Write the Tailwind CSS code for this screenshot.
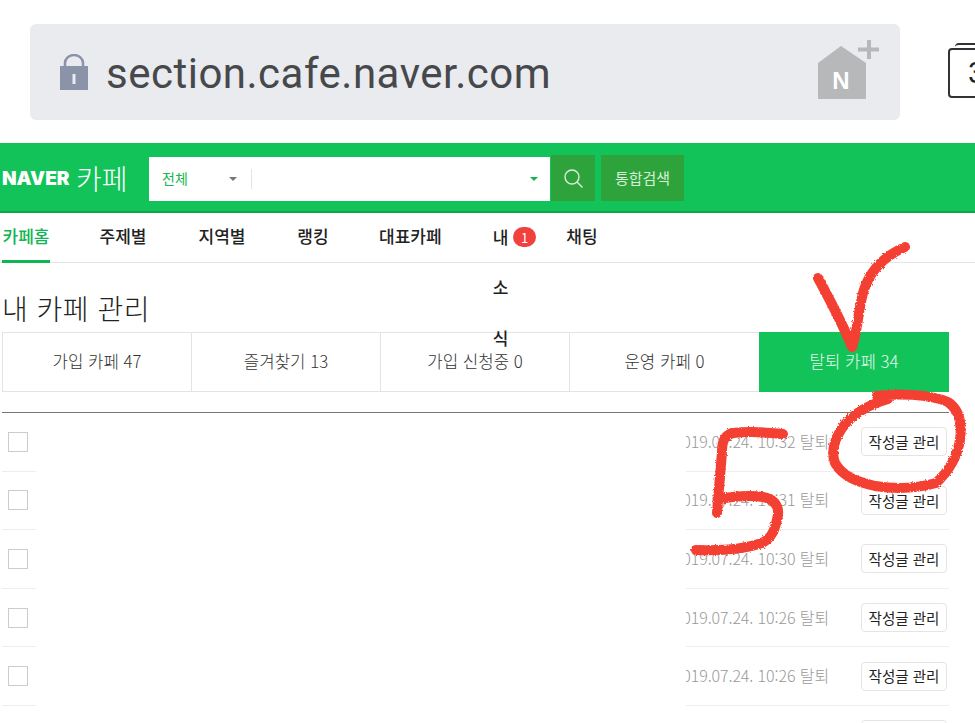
<!DOCTYPE html>
<html lang="ko">

<head>
  <meta charset="UTF-8">
  <script src="https://cdn.jsdelivr.net/npm/@tailwindcss/browser@4"></script>
  <title>내 카페 관리</title>
</head>

<body class="relative h-[723px] w-[975px] overflow-hidden bg-white font-['Noto_Sans_CJK_KR','Noto_Sans',sans-serif] text-[#222]">
  <!-- browser address bar -->
  <div class="flex h-[143px] items-start overflow-hidden pl-[30px] pt-6">
    <div class="flex h-24 w-[870px] shrink-0 items-center rounded-md bg-[#e9ebee] pl-[30px] pr-[21px]">
      <svg class="h-[36px] w-[28px] shrink-0" viewBox="0 0 28 36">
        <path d="M5 14V9a9 8 0 0 1 18 0v5" fill="none" stroke="#8a93a8" stroke-width="2.5" />
        <rect x="0" y="12" width="28" height="24" fill="#8a93a8" />
        <rect x="12.5" y="20" width="3" height="10" fill="#e9ebee" />
      </svg>
      <span class="ml-[18px] mt-[3px] font-['Roboto',sans-serif] text-[42px] leading-none tracking-[0.5px] text-[#47484b]">section.cafe.naver.com</span>
      <svg class="ml-auto mt-[-4px] h-[60px] w-[62px]" viewBox="0 0 62 60">
        <path d="M1 23 24 6 49 23V58a1 1 0 0 1-1 1H2a1 1 0 0 1-1-1Z" fill="#b6b8ba" />
        <path d="M52 0v19M41 9.500h21" stroke="#b6b8ba" stroke-width="4" fill="none" />
        <text x="24" y="49" text-anchor="middle" font-family="Liberation Sans" font-weight="700" font-size="24" fill="#fff">N</text>
      </svg>
    </div>
    <div class="relative ml-[48px] mt-6 h-[50px] w-[60px] shrink-0 rounded-[4px] border-2 border-[#333]">
      <div class="absolute left-[5px] top-[-7px] h-2 w-10 rounded-t-[4px] border-t-2 border-[#333]"></div>
      <span class="absolute left-[18px] top-[8px] font-['Roboto',sans-serif] text-[30px] leading-none text-[#222]">3</span>
    </div>
  </div>

  <!-- green header -->
  <header class="flex h-[70px] items-center border-b-2 border-[#0ea548] bg-[#12c35a] pl-0.5 pt-0.5">
    <span class="w-[70px] font-['Inter',sans-serif] text-[19px] font-black leading-none text-white">NAVER</span>
    <span class="ml-[4px] w-[73px] text-[28px] font-light leading-none text-white">카페</span>
    <div class="mt-px flex h-[44px] w-[401px] items-center bg-white">
      <span class="ml-[13px] w-[67px] text-[14px] text-[#12b553]">전체</span>
      <span class="h-0 w-0 border-x-[4px] border-t-[4px] border-x-transparent border-t-[#777]"></span>
      <span class="ml-[14px] h-5 w-px bg-[#e4e4e4]"></span>
      <span class="ml-auto mr-3 h-0 w-0 border-x-[4px] border-t-[4px] border-x-transparent border-t-[#12b553]"></span>
    </div>
    <div class="ml-px flex h-[46px] w-[44px] items-center justify-center bg-[#2fa33b]">
      <svg class="h-[21px] w-[21px]" viewBox="0 0 21 21" fill="none" stroke="#d8efd9" stroke-width="1.4">
        <circle cx="9" cy="9" r="7" />
        <path d="m14 14 5.500 5.500" />
      </svg>
    </div>
    <div class="ml-[6px] flex h-[46px] w-[83px] items-center justify-center bg-[#2fa33b] text-[15px] text-[#d8efd9]">통합검색</div>
  </header>

  <!-- nav -->
  <nav class="flex h-[50px] border-b border-[#e5e5e5] pl-0.5 text-[17px] font-medium">
    <a class="h-[50px] w-[48px] whitespace-nowrap border-b-[3px] border-[#12b553] text-center leading-[46px] text-[#12b553]">카페홈</a>
    <a class="ml-[49px] w-[48px] whitespace-nowrap text-center leading-[46px]">주제별</a>
    <a class="ml-[51px] w-[48px] whitespace-nowrap text-center leading-[46px]">지역별</a>
    <a class="ml-[51px] w-[32px] whitespace-nowrap text-center leading-[46px]">랭킹</a>
    <a class="ml-[50px] w-[62px] whitespace-nowrap text-center leading-[46px]">대표카페</a>
    <div class="relative z-10 ml-[51px] mt-[-1.500px] h-[50px] w-[17px] break-all text-center leading-[50.500px]">내소식
      <span class="absolute left-[21px] top-[15.500px] flex h-[20px] w-[23px] items-center justify-center rounded-full bg-[#f0413f] text-[13px] font-normal leading-none text-white">1</span>
    </div>
    <a class="ml-[57px] w-[32px] whitespace-nowrap text-center leading-[46px]">채팅</a>
  </nav>

  <main class="pl-0.5">
    <h1 class="mt-[27px] h-[42px] text-[28px] font-light leading-[36px] tracking-[0.5px]">내 카페 관리</h1>

    <!-- tabs -->
    <div class="grid h-[60px] w-[947px] grid-cols-[190px_189px_189px_189px_190px] text-[16.800px] font-light leading-[56px] text-[#333]">
      <a class="border border-[#e3e3e3] text-center">가입 카페 47</a>
      <a class="border-y border-r border-[#e3e3e3] text-center">즐겨찾기 13</a>
      <a class="border-y border-r border-[#e3e3e3] text-center">가입 신청중 0</a>
      <a class="border-y border-[#e3e3e3] text-center">운영 카페 0</a>
      <a class="bg-[#12c35a] text-center leading-[58px] text-[#e6f8ec]">탈퇴 카페 34</a>
    </div>

    <!-- rows -->
    <div class="mt-5 w-[947px] border-t border-[#777]">
      <div class="flex h-[58.600px] items-stretch">
        <div class="flex w-[34px] items-center border-b border-[#eee] pl-1.5"><span class="h-5 w-5 border border-[#ccc]"></span></div>
        <div class="ml-[650px] flex w-[263px] items-center overflow-hidden whitespace-nowrap border-b border-[#eee]"><span class="ml-[-13px] mt-[-2px] w-[156px] shrink-0 text-right text-[16px] font-light tracking-[-0.1px] text-[#999]">2019.07.24. 10:32 탈퇴</span><span class="ml-auto mr-0.5 flex h-[29px] w-[86px] shrink-0 items-center justify-center rounded-[4px] border border-[#e4e4e4] text-[14.500px]">작성글 관리</span></div>
      </div>
      <div class="flex h-[58.600px] items-stretch">
        <div class="flex w-[34px] items-center border-b border-[#eee] pl-1.5"><span class="h-5 w-5 border border-[#ccc]"></span></div>
        <div class="ml-[650px] flex w-[263px] items-center overflow-hidden whitespace-nowrap border-b border-[#eee]"><span class="ml-[-13px] mt-[-2px] w-[156px] shrink-0 text-right text-[16px] font-light tracking-[-0.1px] text-[#999]">2019.07.24. 10:31 탈퇴</span><span class="ml-auto mr-0.5 flex h-[29px] w-[86px] shrink-0 items-center justify-center rounded-[4px] border border-[#e4e4e4] text-[14.500px]">작성글 관리</span></div>
      </div>
      <div class="flex h-[58.600px] items-stretch">
        <div class="flex w-[34px] items-center border-b border-[#eee] pl-1.5"><span class="h-5 w-5 border border-[#ccc]"></span></div>
        <div class="ml-[650px] flex w-[263px] items-center overflow-hidden whitespace-nowrap border-b border-[#eee]"><span class="ml-[-13px] mt-[-2px] w-[156px] shrink-0 text-right text-[16px] font-light tracking-[-0.1px] text-[#999]">2019.07.24. 10:30 탈퇴</span><span class="ml-auto mr-0.5 flex h-[29px] w-[86px] shrink-0 items-center justify-center rounded-[4px] border border-[#e4e4e4] text-[14.500px]">작성글 관리</span></div>
      </div>
      <div class="flex h-[58.600px] items-stretch">
        <div class="flex w-[34px] items-center border-b border-[#eee] pl-1.5"><span class="h-5 w-5 border border-[#ccc]"></span></div>
        <div class="ml-[650px] flex w-[263px] items-center overflow-hidden whitespace-nowrap border-b border-[#eee]"><span class="ml-[-13px] mt-[-2px] w-[156px] shrink-0 text-right text-[16px] font-light tracking-[-0.1px] text-[#999]">2019.07.24. 10:26 탈퇴</span><span class="ml-auto mr-0.5 flex h-[29px] w-[86px] shrink-0 items-center justify-center rounded-[4px] border border-[#e4e4e4] text-[14.500px]">작성글 관리</span></div>
      </div>
      <div class="flex h-[58.600px] items-stretch">
        <div class="flex w-[34px] items-center border-b border-[#eee] pl-1.5"><span class="h-5 w-5 border border-[#ccc]"></span></div>
        <div class="ml-[650px] flex w-[263px] items-center overflow-hidden whitespace-nowrap border-b border-[#eee]"><span class="ml-[-13px] mt-[-2px] w-[156px] shrink-0 text-right text-[16px] font-light tracking-[-0.1px] text-[#999]">2019.07.24. 10:26 탈퇴</span><span class="ml-auto mr-0.5 flex h-[29px] w-[86px] shrink-0 items-center justify-center rounded-[4px] border border-[#e4e4e4] text-[14.500px]">작성글 관리</span></div>
      </div>
      <div class="flex justify-end pr-0.5 pt-[14px]">
        <span class="h-[29px] w-[86px] rounded-[4px] border border-[#e4e4e4]"></span>
      </div>
    </div>
  </main>

  <!-- red marker scribbles over the page -->
  <svg class="pointer-events-none absolute left-0 top-0 z-20 h-[723px] w-[975px]" viewBox="0 0 975 723" fill="none" stroke="#f43f32" stroke-width="10" stroke-linecap="round" stroke-linejoin="round">
    <filter id="rough" x="-5%" y="-5%" width="110%" height="110%">
      <feTurbulence type="fractalNoise" baseFrequency="0.6" numOctaves="2" seed="4" />
      <feDisplacementMap in="SourceGraphic" scale="3" />
    </filter>
    <g filter="url(#rough)">
      <path d="M818 278C830 300 843 325 852 347C857 335 858 312 863 293C868 275 880 258 905 247" />
      <path d="M783 434C765 432 748 431 733 433C724 435 722 442 722 452L717 513M719 499C735 496 750 495 763 497C775 499 779 507 778 515C775 530 772 538 762 543C745 549 720 551 696 550" />
      <path d="M877 396C895 393 930 394 948 402C960 410 962 425 960 440C957 458 948 472 936 483C915 489 895 489 875 486C858 482 843 477 835 463C830 450 836 435 846 423C856 412 868 405 888 399" />
    </g>
  </svg>
</body>

</html>
